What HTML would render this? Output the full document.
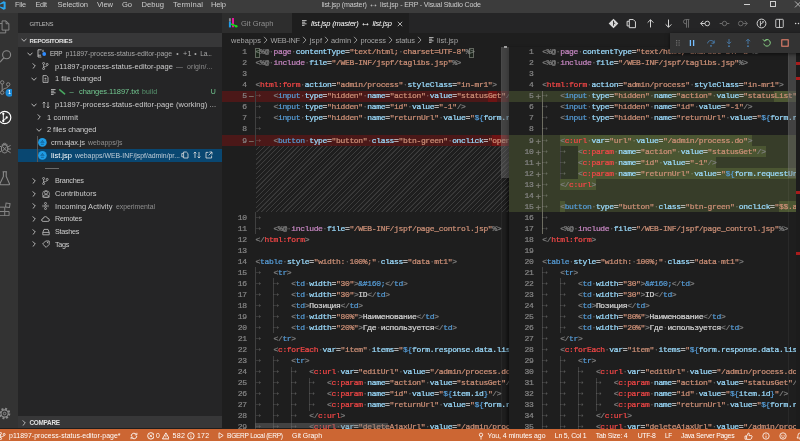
<!DOCTYPE html>
<html lang="en"><head><meta charset="utf-8"><title>list.jsp (master) ↔ list.jsp - ERP - Visual Studio Code</title>
<style>
html,body{margin:0;padding:0;background:#1e1e1e;overflow:hidden}
body{width:800px;height:441px;position:relative;font-family:"Liberation Sans",sans-serif;color:#cccccc;font-size:7.5px}
div,span,svg{position:absolute;box-sizing:border-box}
.t{white-space:pre;line-height:12px;height:12px}
#title{left:0;top:0;width:800px;height:13.3px;background:#3c3c3c}
#act{left:0;top:13.3px;width:17.7px;height:415px;background:#333333}
#side{left:17.7px;top:13.3px;width:204.5px;height:415px;background:#252526;overflow:hidden}
#tabs{left:222.2px;top:13.3px;width:577.8px;height:20px;background:#252526}
#crumbs{left:222.2px;top:33.3px;width:577.8px;height:13.4px;background:#1e1e1e}
#status{left:0;top:428.7px;width:800px;height:12.3px;background:#cc6633;color:#fff}
.pane{top:46.7px;height:382.1px;overflow:hidden;font-family:"Liberation Mono",monospace;font-size:8px;letter-spacing:-0.335px;-webkit-text-stroke:.22px;color:#d4d4d4}
#paneL{left:222px;width:287px}
#paneR{left:509px;width:286.8px;box-shadow:-3px 0 3px -1px rgba(0,0,0,.55)}
.lb{left:0;width:100%;height:11.03px}
.lb.del{background:#4b1818}
.lb.ins{background:#373d29}
.cb{height:11.03px}
.cb.del{background:#6e1414}
.cb.ins{background:#4b5632}
.hatch{right:0;background:repeating-linear-gradient(135deg,#1e1e1e 0,#1e1e1e 2.3px,#3d3d3d 2.6px,#3d3d3d 3.2px,#1e1e1e 3.4px)}
.gd{width:.6px;background:#404040}
.ln{left:0;height:11.03px;line-height:11.7px;color:#858585;white-space:pre}
.ln s{left:0;top:0;text-decoration:none;text-align:right;position:absolute;display:block}
.ln u{left:26.6px;top:1.6px;text-decoration:none;position:absolute;color:#808078;font-size:9.4px;letter-spacing:0}
.cl{height:11.03px;line-height:11.7px;white-space:pre}
.cl b,.cl i{font-weight:normal;font-style:normal}
.cl i{color:rgba(227,228,226,.23)}
.g{color:#808080}.k{color:#c586c0}.r{color:#f44747}.a{color:#9cdcfe}.s{color:#ce9178}
.h{color:#569cd6}
.hsb{left:33px;top:376.3px;width:132.5px;height:5.4px;background:rgba(121,121,121,.4)}
.gd.hi{background:#6c6c60;width:1px}
.ar{position:static;font-size:1.4em;line-height:0;font-style:normal}
.cl i.tb{display:inline-block;position:static;width:17.86px;letter-spacing:0;font-size:8.6px;height:11.03px;line-height:11.5px;vertical-align:top;overflow:hidden}
#app{left:0;top:0;width:800px;height:441px;overflow:hidden;will-change:transform}
.cb.dk{background:#303626}

</style></head><body>
<div id="app">
<div id="title"></div><div id="act"></div><div id="side"></div><div id="tabs"></div><div id="crumbs"></div>
<svg style="left:0.00px;top:0.50px" width="6.00" height="9.00" viewBox="0 0 6 9" ><path d="M0 2.6 L3.6 0.2 L5.6 1 L5.6 8 L3.6 8.8 L0 6.4 L0 5.4 L3.6 6.6 L3.6 2.4 L0 3.6 Z" fill="#2aa7f0"/></svg>
<span class="t " style="left:15.00px;top:-1.10px;font-size:7.35px;letter-spacing:-0.280px;color:#cccccc;">File</span>
<span class="t " style="left:35.50px;top:-1.10px;font-size:7.16px;letter-spacing:-0.280px;color:#cccccc;">Edit</span>
<span class="t " style="left:57.50px;top:-1.10px;font-size:7.60px;letter-spacing:-0.094px;color:#cccccc;">Selection</span>
<span class="t " style="left:97.00px;top:-1.10px;font-size:7.60px;letter-spacing:-0.109px;color:#cccccc;">View</span>
<span class="t " style="left:122.00px;top:-1.10px;font-size:7.60px;letter-spacing:-0.141px;color:#cccccc;">Go</span>
<span class="t " style="left:141.50px;top:-1.10px;font-size:7.60px;letter-spacing:0.027px;color:#cccccc;">Debug</span>
<span class="t " style="left:173.00px;top:-1.10px;font-size:7.60px;letter-spacing:0.185px;color:#cccccc;">Terminal</span>
<span class="t " style="left:211.00px;top:-1.10px;font-size:7.60px;letter-spacing:-0.208px;color:#cccccc;">Help</span>
<span class="t " style="left:321.70px;top:-1.10px;font-size:7.10px;letter-spacing:-0.178px;color:#cccccc;">list.jsp (master) <span class="ar">↔</span> list.jsp - ERP - Visual Studio Code</span>
<div style="left:743.5px;top:4.2px;width:6.5px;height:.8px;background:#d0d0d0"></div>
<div style="left:770px;top:1.3px;width:6.4px;height:6.2px;border:.8px solid #d0d0d0"></div>
<svg style="left:794.00px;top:1.00px" width="8.00" height="8.00" viewBox="0 0 8 8" ><path d="M1 0.4 L7 6.4 M7 0.4 L1 6.4" stroke="#d0d0d0" stroke-width=".8"/></svg>
<svg style="left:-0.60px;top:20.00px" width="10.60" height="14.00" viewBox="0 0 12 15" ><path d="M3.5 0.6 H8 L11.2 3.8 V11 H3.5 Z M8 0.6 V3.8 H11.2" fill="none" stroke="#8a8a8a" stroke-width="1.1"/><path d="M3.5 3.6 H0 M0.5 3.6 V14.2 H7.6 V11" fill="none" stroke="#8a8a8a" stroke-width="1.1"/></svg>
<svg style="left:0.00px;top:50.00px" width="12.00" height="13.00" viewBox="0 0 12 13" ><circle cx="6.6" cy="4.8" r="4" fill="none" stroke="#8a8a8a" stroke-width="1.1"/><path d="M3.8 7.8 L0 12.2" stroke="#8a8a8a" stroke-width="1.2"/></svg>
<svg style="left:0.00px;top:80.00px" width="12.00" height="17.00" viewBox="0 0 12 17" ><circle cx="2.2" cy="2.4" r="1.7" fill="none" stroke="#8a8a8a" stroke-width="1"/><circle cx="8.2" cy="4.4" r="1.7" fill="none" stroke="#8a8a8a" stroke-width="1"/><circle cx="2.2" cy="12.6" r="1.7" fill="none" stroke="#8a8a8a" stroke-width="1"/><path d="M2.2 4.1 V10.9 M8.2 6.1 C8.2 8.8 2.2 8 2.2 10.9" fill="none" stroke="#8a8a8a" stroke-width="1"/><circle cx="9.5" cy="12.7" r="4" fill="#1d8ad6"/></svg>
<span class="t " style="left:8.30px;top:87.20px;font-size:4.60px;color:#fff;font-weight:bold">1</span>
<svg style="left:0.00px;top:110.00px" width="12.00" height="15.00" viewBox="0 0 12 15" ><circle cx="4.7" cy="7.5" r="6.1" fill="#333333" stroke="#ffffff" stroke-width="1.2"/><path d="M3.3 3.8 V11 M3.3 10.6 C3.3 8.6 6.6 9.6 6.6 7.6" fill="none" stroke="#fff" stroke-width="1"/><circle cx="3.3" cy="3.8" r="1.15" fill="#fff"/><circle cx="3.3" cy="11" r="1.15" fill="#fff"/><circle cx="6.7" cy="7.4" r="1.15" fill="#fff"/></svg>
<svg style="left:0.00px;top:141.00px" width="12.00" height="15.00" viewBox="0 0 12 15" ><ellipse cx="4.6" cy="7.8" rx="3.2" ry="4.2" fill="none" stroke="#8a8a8a" stroke-width="1.1"/><path d="M2 4.4 C2.4 1.6 6.8 1.6 7.2 4.4 M7.8 6 L10.6 4.4 M7.8 8 H11 M7.8 10 L10.6 11.8 M1.4 6 L0 5.2 M1.4 10 L0 11 M2.6 5.6 L6.6 10 M6.6 5.6 L2.6 10" fill="none" stroke="#8a8a8a" stroke-width="1"/></svg>
<svg style="left:0.00px;top:171.00px" width="11.00" height="15.00" viewBox="0 0 11 15" ><path d="M2.6 0.8 H7 M3.4 0.8 V5.4 L0 12.6 Q-0.2 13.8 1 13.8 H8.6 Q9.8 13.8 9.4 12.6 L6.2 5.4 V0.8" fill="none" stroke="#8a8a8a" stroke-width="1.1"/></svg>
<svg style="left:0.00px;top:201.50px" width="10.50" height="14.50" viewBox="0 0 12 16" ><path d="M0 5.6 H5.4 V10.6 H0 M5.4 10.6 H10.4 V15.4 H0 M5.4 10.6 V15.4" fill="none" stroke="#8a8a8a" stroke-width="1.1"/><rect x="6.6" y="1.2" width="4.6" height="4.6" fill="none" stroke="#8a8a8a" stroke-width="1.1" transform="rotate(8 9 3.5)"/></svg>
<svg style="left:0.00px;top:405.50px" width="12.00" height="15.00" viewBox="0 0 12 15" ><circle cx="4.6" cy="7.5" r="4.6" fill="none" stroke="#8a8a8a" stroke-width="2.2" stroke-dasharray="1.9 1.7"/><circle cx="4.6" cy="7.5" r="3.6" fill="none" stroke="#8a8a8a" stroke-width="1.1"/><circle cx="4.6" cy="7.5" r="1.3" fill="none" stroke="#8a8a8a" stroke-width="1"/></svg>
<span class="t " style="left:29.50px;top:18.30px;font-size:6.01px;letter-spacing:-0.280px;color:#bbbbbb;">GITLENS</span>
<div style="left:17.7px;top:33.4px;width:204.5px;height:13.3px;background:#373738"></div>
<svg style="left:21.00px;top:37.30px" width="6.00" height="6.00" viewBox="0 0 6 6" ><path d="M0.5 1.7 L3 4.3 L5.5 1.7" fill="none" stroke="#c5c5c5" stroke-width="0.9"/></svg>
<span class="t " style="left:29.50px;top:34.50px;font-size:6.17px;letter-spacing:-0.280px;color:#e0e0e0;font-weight:bold">REPOSITORIES</span>
<svg style="left:27.00px;top:50.60px" width="6.00" height="6.00" viewBox="0 0 6 6" ><path d="M0.5 1.7 L3 4.3 L5.5 1.7" fill="none" stroke="#c5c5c5" stroke-width="0.9"/></svg>
<svg style="left:36.50px;top:49.10px" width="10.00" height="9.00" viewBox="0 0 10 9" ><path d="M1 0.8 H4.6 M1 0.8 V8 H4.4 M1 6.2 H4 M6 0.8 V3 M2.6 2.2 V2.4 M2.6 3.8 V4" fill="none" stroke="#c5c5c5" stroke-width=".9"/><circle cx="7.2" cy="5" r="1.9" fill="#2f8cff"/></svg>
<span class="t " style="left:50.00px;top:47.90px;font-size:6.35px;letter-spacing:-0.280px;color:#cccccc;">ERP</span>
<span class="t " style="left:65.50px;top:47.90px;font-size:6.90px;letter-spacing:-0.008px;color:#a8a8a8;">p11897-process-status-editor-page</span>
<span class="t " style="left:176.30px;top:47.90px;font-size:6.90px;color:#a8a8a8;">•</span>
<span class="t " style="left:183.00px;top:47.90px;font-size:7.22px;letter-spacing:0.280px;color:#a8a8a8;">+1</span>
<span class="t " style="left:194.30px;top:47.90px;font-size:6.90px;color:#a8a8a8;">•</span>
<span class="t " style="left:200.30px;top:47.90px;font-size:6.70px;color:#a8a8a8;letter-spacing:-0.35px;">La...</span>
<svg style="left:31.00px;top:63.33px" width="6.00" height="6.00" viewBox="0 0 6 6" ><path d="M1.7 0.4 L4.3 3 L1.7 5.6" fill="none" stroke="#c5c5c5" stroke-width="0.9"/></svg>
<svg style="left:42.00px;top:62.33px" width="7.00" height="8.00" viewBox="0 0 7 8" ><circle cx="1.6" cy="1.4" r="1" fill="none" stroke="#c5c5c5" stroke-width=".7"/><circle cx="1.6" cy="6.6" r="1" fill="none" stroke="#c5c5c5" stroke-width=".7"/><circle cx="5.2" cy="2.4" r="1" fill="none" stroke="#c5c5c5" stroke-width=".7"/><path d="M1.6 2.4 V5.6 M5.2 3.4 C5.2 4.8 1.6 4.2 1.6 5.6" fill="none" stroke="#c5c5c5" stroke-width=".7"/></svg>
<span class="t " style="left:55.00px;top:60.62px;font-size:7.50px;letter-spacing:0.057px;color:#cccccc;">p11897-process-status-editor-page</span>
<span class="t " style="left:176.00px;top:60.62px;font-size:6.90px;letter-spacing:0.114px;color:#8f8f8f;">—  origin/...</span>
<svg style="left:31.00px;top:76.05px" width="6.00" height="6.00" viewBox="0 0 6 6" ><path d="M0.5 1.7 L3 4.3 L5.5 1.7" fill="none" stroke="#c5c5c5" stroke-width="0.9"/></svg>
<svg style="left:41.50px;top:75.05px" width="7.00" height="8.00" viewBox="0 0 7 8" ><path d="M1 0.6 H4.4 L6 2.2 V7.4 H1 Z" fill="none" stroke="#c5c5c5" stroke-width=".8"/><path d="M2.4 3.6 H4.6 M3.5 2.6 V4.6 M2.4 5.8 H4.6" stroke="#c5c5c5" stroke-width=".6"/></svg>
<span class="t " style="left:55.00px;top:73.35px;font-size:7.50px;letter-spacing:-0.016px;color:#cccccc;">1 file changed</span>
<svg style="left:51.00px;top:88.78px" width="5.00" height="6.00" viewBox="0 0 5 6" ><path d="M0 0.6 H4.6 M0 2.2 H3.2 M0 3.8 H4.6 M0 5.4 H2.6" stroke="#c5c5c5" stroke-width=".9"/></svg>
<svg style="left:59.00px;top:88.78px" width="7.00" height="6.00" viewBox="0 0 7 6" ><path d="M0.8 0.8 L5.6 4.8" stroke="#48a860" stroke-width="1.6" stroke-linecap="round"/></svg>
<span class="t " style="left:69.50px;top:86.08px;font-size:7.50px;color:#73c991;">–</span>
<span class="t " style="left:79.00px;top:86.08px;font-size:7.50px;letter-spacing:-0.047px;color:#73c991;">changes.11897.txt</span>
<span class="t " style="left:142.00px;top:86.08px;font-size:6.90px;letter-spacing:0.109px;color:#5a9a72;">build</span>
<span class="t " style="left:210.80px;top:86.08px;font-size:7.00px;color:#73c991;">U</span>
<svg style="left:31.00px;top:101.50px" width="6.00" height="6.00" viewBox="0 0 6 6" ><path d="M0.5 1.7 L3 4.3 L5.5 1.7" fill="none" stroke="#c5c5c5" stroke-width="0.9"/></svg>
<svg style="left:41.50px;top:100.50px" width="8.00" height="8.00" viewBox="0 0 8 8" ><path d="M2 1 V7 M0.6 2.4 L2 1 L3.4 2.4 M6 7 V1 M4.6 5.6 L6 7 L7.4 5.6" fill="none" stroke="#c5c5c5" stroke-width=".8"/></svg>
<span class="t " style="left:55.00px;top:98.80px;font-size:7.50px;letter-spacing:0.077px;color:#cccccc;">p11897-process-status-editor-page (working) ...</span>
<svg style="left:35.50px;top:114.22px" width="6.00" height="6.00" viewBox="0 0 6 6" ><path d="M1.7 0.4 L4.3 3 L1.7 5.6" fill="none" stroke="#c5c5c5" stroke-width="0.9"/></svg>
<span class="t " style="left:47.00px;top:111.52px;font-size:7.50px;letter-spacing:0.083px;color:#cccccc;">1 commit</span>
<svg style="left:35.50px;top:126.95px" width="6.00" height="6.00" viewBox="0 0 6 6" ><path d="M0.5 1.7 L3 4.3 L5.5 1.7" fill="none" stroke="#c5c5c5" stroke-width="0.9"/></svg>
<span class="t " style="left:47.00px;top:124.25px;font-size:7.50px;letter-spacing:-0.068px;color:#cccccc;">2 files changed</span>
<div style="left:17.7px;top:149.04px;width:204.5px;height:12.72px;background:#094771"></div>
<div style="left:36.8px;top:136.31px;width:.7px;height:25.4px;background:#585858"></div>
<svg style="left:38.30px;top:138.28px" width="8.80" height="8.80" viewBox="0 0 9 9" ><circle cx="4.5" cy="4.5" r="4.4" fill="#1f9ce4"/><path d="M4 2 H5 V3 H6 V3.8 H3 V3 H4 Z M2.4 4.4 H6.6 V5.2 H2.4 Z M3 5.8 H6 V7 H3 Z" fill="#13679f"/></svg>
<span class="t " style="left:51.00px;top:136.98px;font-size:7.50px;letter-spacing:-0.184px;color:#cccccc;">crm.ajax.js</span>
<span class="t " style="left:88.00px;top:136.98px;font-size:6.90px;letter-spacing:0.002px;color:#8f8f8f;">webapps/js</span>
<svg style="left:38.30px;top:151.00px" width="8.80" height="8.80" viewBox="0 0 9 9" ><circle cx="4.5" cy="4.5" r="4.4" fill="#1f9ce4"/><path d="M4 2 H5 V3 H6 V3.8 H3 V3 H4 Z M2.4 4.4 H6.6 V5.2 H2.4 Z M3 5.8 H6 V7 H3 Z" fill="#13679f"/></svg>
<span class="t " style="left:51.00px;top:149.70px;font-size:7.50px;letter-spacing:0.022px;color:#ffffff;">list.jsp</span>
<span class="t " style="left:75.00px;top:149.70px;font-size:6.90px;letter-spacing:-0.010px;color:#c0cdd8;">webapps/WEB-INF/jspf/admin/pr...</span>
<svg style="left:181.00px;top:151.40px" width="8.00" height="8.00" viewBox="0 0 8 8" ><path d="M2.6 1 H5.4 L7 2.6 V7 H2.6 Z M0.8 2.4 H2.4 M0.8 2.4 V5.8 H2.4" fill="none" stroke="#e0e0e0" stroke-width=".8"/></svg>
<svg style="left:193.00px;top:151.40px" width="8.00" height="8.00" viewBox="0 0 8 8" ><path d="M2 1 V7 M0.6 2.4 L2 1 L3.4 2.4 M6 7 V1 M4.6 5.6 L6 7 L7.4 5.6" fill="none" stroke="#e0e0e0" stroke-width=".8"/></svg>
<svg style="left:205.00px;top:151.40px" width="8.00" height="8.00" viewBox="0 0 8 8" ><path d="M3.4 1.4 H1 V7 H6.6 V4.6 M4.4 1 H7 V3.6 M7 1 L3.6 4.4" fill="none" stroke="#e0e0e0" stroke-width=".8"/></svg>
<div style="left:45px;top:167.82px;width:14px;height:.7px;background:#6a6a6a"></div>
<svg style="left:31.00px;top:177.85px" width="6.00" height="6.00" viewBox="0 0 6 6" ><path d="M1.7 0.4 L4.3 3 L1.7 5.6" fill="none" stroke="#c5c5c5" stroke-width="0.9"/></svg>
<span class="t " style="left:55.00px;top:175.15px;font-size:7.33px;letter-spacing:-0.280px;color:#cccccc;">Branches</span>
<svg style="left:31.00px;top:190.57px" width="6.00" height="6.00" viewBox="0 0 6 6" ><path d="M1.7 0.4 L4.3 3 L1.7 5.6" fill="none" stroke="#c5c5c5" stroke-width="0.9"/></svg>
<span class="t " style="left:55.00px;top:187.88px;font-size:7.50px;letter-spacing:0.058px;color:#cccccc;">Contributors</span>
<svg style="left:31.00px;top:203.30px" width="6.00" height="6.00" viewBox="0 0 6 6" ><path d="M1.7 0.4 L4.3 3 L1.7 5.6" fill="none" stroke="#c5c5c5" stroke-width="0.9"/></svg>
<span class="t " style="left:55.00px;top:200.60px;font-size:7.50px;letter-spacing:0.103px;color:#cccccc;">Incoming Activity</span>
<svg style="left:31.00px;top:216.02px" width="6.00" height="6.00" viewBox="0 0 6 6" ><path d="M1.7 0.4 L4.3 3 L1.7 5.6" fill="none" stroke="#c5c5c5" stroke-width="0.9"/></svg>
<span class="t " style="left:55.00px;top:213.32px;font-size:7.17px;letter-spacing:-0.280px;color:#cccccc;">Remotes</span>
<svg style="left:31.00px;top:228.75px" width="6.00" height="6.00" viewBox="0 0 6 6" ><path d="M1.7 0.4 L4.3 3 L1.7 5.6" fill="none" stroke="#c5c5c5" stroke-width="0.9"/></svg>
<span class="t " style="left:55.00px;top:226.05px;font-size:7.24px;letter-spacing:-0.280px;color:#cccccc;">Stashes</span>
<svg style="left:31.00px;top:241.47px" width="6.00" height="6.00" viewBox="0 0 6 6" ><path d="M1.7 0.4 L4.3 3 L1.7 5.6" fill="none" stroke="#c5c5c5" stroke-width="0.9"/></svg>
<span class="t " style="left:55.00px;top:238.78px;font-size:7.26px;letter-spacing:-0.280px;color:#cccccc;">Tags</span>
<span class="t " style="left:116.00px;top:200.60px;font-size:6.90px;letter-spacing:-0.041px;color:#8f8f8f;">experimental</span>
<svg style="left:42.00px;top:176.85px" width="7.00" height="8.00" viewBox="0 0 7 8" ><circle cx="1.6" cy="1.4" r="1" fill="none" stroke="#c5c5c5" stroke-width=".7"/><circle cx="1.6" cy="6.6" r="1" fill="none" stroke="#c5c5c5" stroke-width=".7"/><circle cx="5.2" cy="2.4" r="1" fill="none" stroke="#c5c5c5" stroke-width=".7"/><path d="M1.6 2.4 V5.6 M5.2 3.4 C5.2 4.8 1.6 4.2 1.6 5.6" fill="none" stroke="#c5c5c5" stroke-width=".7"/></svg>
<svg style="left:41.50px;top:189.57px" width="8.00" height="8.00" viewBox="0 0 8 8" ><circle cx="4" cy="2.6" r="1.5" fill="none" stroke="#c5c5c5" stroke-width=".7"/><path d="M0.8 7.2 C0.8 3.8 7.2 3.8 7.2 7.2 Z" fill="none" stroke="#c5c5c5" stroke-width=".7"/><circle cx="4" cy="4.2" r="3.6" fill="none" stroke="#c5c5c5" stroke-width=".6"/></svg>
<svg style="left:42.00px;top:202.30px" width="7.00" height="8.00" viewBox="0 0 7 8" ><circle cx="3.5" cy="1.4" r="1" fill="none" stroke="#c5c5c5" stroke-width=".7"/><circle cx="3.5" cy="6.6" r="1" fill="none" stroke="#c5c5c5" stroke-width=".7"/><circle cx="3.5" cy="4" r="1" fill="none" stroke="#c5c5c5" stroke-width=".7"/><path d="M1 2.8 V5.2 M6 2.8 V5.2" stroke="#c5c5c5" stroke-width=".7"/></svg>
<svg style="left:41.00px;top:215.02px" width="9.00" height="8.00" viewBox="0 0 9 8" ><path d="M2.2 6.4 Q0.6 6.4 0.6 5 Q0.6 3.6 2.2 3.6 Q2.4 1.6 4.4 1.6 Q6.2 1.6 6.6 3.4 Q8.4 3.4 8.4 5 Q8.4 6.4 6.8 6.4 Z" fill="none" stroke="#c5c5c5" stroke-width=".8"/></svg>
<svg style="left:41.50px;top:227.75px" width="8.00" height="8.00" viewBox="0 0 8 8" ><path d="M0.8 4.4 L2 1.4 H6 L7.2 4.4 V6.8 H0.8 Z M0.8 4.4 H7.2" fill="none" stroke="#c5c5c5" stroke-width=".8"/></svg>
<svg style="left:41.50px;top:240.47px" width="8.00" height="8.00" viewBox="0 0 8 8" ><path d="M0.6 4 L3.6 1 H7.2 V4.4 L4.2 7.4 Z" fill="none" stroke="#c5c5c5" stroke-width=".8"/><circle cx="5.6" cy="2.6" r=".6" fill="#c5c5c5"/></svg>
<div style="left:17.7px;top:416.2px;width:204.5px;height:12.2px;background:#373738"></div>
<svg style="left:21.00px;top:419.60px" width="6.00" height="6.00" viewBox="0 0 6 6" ><path d="M1.7 0.4 L4.3 3 L1.7 5.6" fill="none" stroke="#c5c5c5" stroke-width="0.9"/></svg>
<span class="t " style="left:29.50px;top:416.90px;font-size:6.40px;letter-spacing:-0.280px;color:#e0e0e0;font-weight:bold">COMPARE</span>
<div style="left:222.2px;top:13.3px;width:69.7px;height:20px;background:#2d2d2d"></div>
<div style="left:292.3px;top:13.3px;width:116.9px;height:20px;background:#1e1e1e"></div>
<svg style="left:228.00px;top:17.00px" width="10.00" height="12.00" viewBox="0 0 10 12" ><path d="M1.9 1.2 V4.6" stroke="#8a8f94" stroke-width="1.9"/><path d="M1.9 4.6 V10.4" stroke="#1e9be8" stroke-width="2"/><path d="M5 0.9 V10.3" stroke="#e6169e" stroke-width="2"/><path d="M3 7 L8 9" stroke="#16d616" stroke-width="1.6"/><circle cx="8.2" cy="9.2" r="1.3" fill="#16e016"/></svg>
<span class="t " style="left:241.00px;top:18.10px;font-size:7.50px;letter-spacing:-0.002px;color:#8f8f8f;">Git Graph</span>
<svg style="left:302.00px;top:19.80px" width="5.00" height="6.00" viewBox="0 0 5 6" ><path d="M0 0.6 H4.6 M0 2.2 H3.2 M0 3.8 H4.6 M0 5.4 H2.6" stroke="#d0d0d0" stroke-width=".9"/></svg>
<span class="t " style="left:311.00px;top:18.10px;font-size:7.50px;letter-spacing:-0.198px;color:#ffffff;font-style:italic">list.jsp (master) <span class="ar">↔</span> list.jsp</span>
<svg style="left:397.00px;top:20.60px" width="6.00" height="6.00" viewBox="0 0 6 6" ><path d="M0.8 0.8 L5.2 5.2 M5.2 0.8 L0.8 5.2" stroke="#d0d0d0" stroke-width=".8"/></svg>
<svg style="left:607.50px;top:18.20px" width="11.00" height="11.00" viewBox="0 0 10 10" ><path d="M5 0.6 L9.4 5 L5 9.4 L0.6 5 Z" fill="#d8d8d8"/><path d="M5 2.6 V7 M5 4.2 L6.6 5.2" stroke="#252526" stroke-width=".8" fill="none"/></svg>
<svg style="left:626.00px;top:18.20px" width="11.00" height="11.00" viewBox="0 0 10 10" ><path d="M3 1.4 H6.6 L8.6 3.4 V8.8 H3 Z M1 3 H2.8 M1 3 V7.2 H2.8" fill="none" stroke="#d8d8d8" stroke-width=".9"/></svg>
<svg style="left:644.50px;top:18.20px" width="11.00" height="11.00" viewBox="0 0 10 10" ><path d="M5 8.6 V1.6 M2.4 4.2 L5 1.6 L7.6 4.2" fill="none" stroke="#d8d8d8" stroke-width=".9"/></svg>
<svg style="left:662.80px;top:18.20px" width="11.00" height="11.00" viewBox="0 0 10 10" ><path d="M5 1.4 V8.4 M2.4 5.8 L5 8.4 L7.6 5.8" fill="none" stroke="#d8d8d8" stroke-width=".9"/></svg>
<svg style="left:681.00px;top:18.20px" width="11.00" height="11.00" viewBox="0 0 10 10" ><path d="M6.8 1.4 V8.8 M5 1.4 V8.8 M7.6 1.4 H4.4 Q2.2 1.4 2.2 3.4 Q2.2 5.4 5 5.4" fill="none" stroke="#6c6c6c" stroke-width=".9"/></svg>
<svg style="left:700.00px;top:18.20px" width="11.00" height="11.00" viewBox="0 0 10 10" ><circle cx="6.6" cy="5" r="2.1" fill="none" stroke="#d8d8d8" stroke-width=".85"/><path d="M4.4 5 H0.6 M3 2.6 L0.6 5 L3 7.4" fill="none" stroke="#d8d8d8" stroke-width=".85"/></svg>
<svg style="left:718.50px;top:18.20px" width="11.00" height="11.00" viewBox="0 0 10 10" ><circle cx="5" cy="5" r="2" fill="none" stroke="#6c6c6c" stroke-width=".9"/><path d="M0.6 5 H3 M7 5 H9.4" stroke="#6c6c6c" stroke-width=".9"/></svg>
<svg style="left:737.00px;top:18.20px" width="11.00" height="11.00" viewBox="0 0 10 10" ><circle cx="3.4" cy="5" r="2.1" fill="none" stroke="#6c6c6c" stroke-width=".85"/><path d="M5.6 5 H9.4 M7 2.6 L9.4 5 L7 7.4" fill="none" stroke="#6c6c6c" stroke-width=".85"/></svg>
<svg style="left:756.00px;top:18.20px" width="11.00" height="11.00" viewBox="0 0 10 10" ><circle cx="5" cy="5" r="4" fill="none" stroke="#d8d8d8" stroke-width=".9"/><path d="M4 2.6 V7.6 M4 6 C4 4.8 6.4 5.2 6.4 3.8" fill="none" stroke="#d8d8d8" stroke-width=".8"/><circle cx="6.4" cy="3.4" r=".7" fill="#d8d8d8"/></svg>
<svg style="left:774.00px;top:18.20px" width="11.00" height="11.00" viewBox="0 0 10 10" ><rect x="1.6" y="1.2" width="6.8" height="7.4" rx=".6" fill="none" stroke="#d8d8d8" stroke-width=".8"/><path d="M5 1.2 V8.6" stroke="#d8d8d8" stroke-width=".8"/></svg>
<svg style="left:792.50px;top:18.20px" width="11.00" height="11.00" viewBox="0 0 10 10" ><circle cx="2.4" cy="5" r=".7" fill="#d8d8d8"/><circle cx="5" cy="5" r=".7" fill="#d8d8d8"/><circle cx="7.6" cy="5" r=".7" fill="#d8d8d8"/></svg>
<span class="t " style="left:231.00px;top:34.60px;font-size:7.40px;letter-spacing:0.068px;color:#a6a6a6;">webapps</span>
<span class="t " style="left:270.50px;top:34.60px;font-size:7.39px;letter-spacing:-0.280px;color:#a6a6a6;">WEB-INF</span>
<span class="t " style="left:309.50px;top:34.60px;font-size:7.49px;letter-spacing:0.280px;color:#a6a6a6;">jspf</span>
<span class="t " style="left:331.00px;top:34.60px;font-size:7.40px;letter-spacing:-0.035px;color:#a6a6a6;">admin</span>
<span class="t " style="left:360.50px;top:34.60px;font-size:7.40px;letter-spacing:-0.065px;color:#a6a6a6;">process</span>
<span class="t " style="left:395.50px;top:34.60px;font-size:7.40px;letter-spacing:-0.044px;color:#a6a6a6;">status</span>
<span class="t " style="left:437.00px;top:34.60px;font-size:7.40px;letter-spacing:0.065px;color:#a6a6a6;">list.jsp</span>
<svg style="left:263.00px;top:36.00px" width="5.00" height="8.00" viewBox="0 0 5 8" ><path d="M1 0.8 L4 4 L1 7.2" fill="none" stroke="#a0a0a0" stroke-width="0.9"/></svg>
<svg style="left:302.00px;top:36.00px" width="5.00" height="8.00" viewBox="0 0 5 8" ><path d="M1 0.8 L4 4 L1 7.2" fill="none" stroke="#a0a0a0" stroke-width="0.9"/></svg>
<svg style="left:324.00px;top:36.00px" width="5.00" height="8.00" viewBox="0 0 5 8" ><path d="M1 0.8 L4 4 L1 7.2" fill="none" stroke="#a0a0a0" stroke-width="0.9"/></svg>
<svg style="left:353.00px;top:36.00px" width="5.00" height="8.00" viewBox="0 0 5 8" ><path d="M1 0.8 L4 4 L1 7.2" fill="none" stroke="#a0a0a0" stroke-width="0.9"/></svg>
<svg style="left:388.00px;top:36.00px" width="5.00" height="8.00" viewBox="0 0 5 8" ><path d="M1 0.8 L4 4 L1 7.2" fill="none" stroke="#a0a0a0" stroke-width="0.9"/></svg>
<svg style="left:417.00px;top:36.00px" width="5.00" height="8.00" viewBox="0 0 5 8" ><path d="M1 0.8 L4 4 L1 7.2" fill="none" stroke="#a0a0a0" stroke-width="0.9"/></svg>
<svg style="left:428.60px;top:37.30px" width="5.00" height="6.00" viewBox="0 0 5 6" ><path d="M0 0.6 H4.6 M0 2.2 H3.2 M0 3.8 H4.6 M0 5.4 H2.6" stroke="#c5c5c5" stroke-width=".9"/></svg>
<div id="paneL" class="pane">
<div class="lb del" style="top:44.12px"></div>
<div class="cb del" style="top:44.12px;left:265.78px;width:8.93px"></div>
<div class="lb del" style="top:88.24px"></div>
<div class="cb del" style="top:88.24px;left:270.25px;width:160.74px"></div>
<div class="hatch" style="top:99.27px;height:66.18px;left:33.60px"></div>
<div class="gd" style="left:33.30px;top:44.12px;height:55.15px"></div>
<div class="gd" style="left:33.30px;top:165.45px;height:22.06px"></div>
<div class="gd" style="left:33.30px;top:220.60px;height:165.45px"></div>
<div class="gd" style="left:51.16px;top:231.63px;height:55.15px"></div>
<div class="gd" style="left:51.16px;top:308.84px;height:77.21px"></div>
<div class="gd" style="left:69.02px;top:319.87px;height:66.18px"></div>
<div class="gd" style="left:86.88px;top:330.90px;height:33.09px"></div>
<div class="ln" style="top:-0.70px"><s style="width:24.80px">1</s></div>
<div class="cl" style="top:-0.70px;left:33.60px"><b class="g">&lt;%@</b><i>·</i><b class="k">page</b><i>·</i><b class="a">contentType</b>=<b class="s">"text/html;</b><i>·</i><b class="s">charset=UTF-8"</b><b class="g">%&gt;</b></div>
<div class="ln" style="top:10.30px"><s style="width:24.80px">2</s></div>
<div class="cl" style="top:10.30px;left:33.60px"><b class="g">&lt;%@</b><i>·</i><b class="k">include</b><i>·</i><b class="a">file</b>=<b class="s">"/WEB-INF/jspf/taglibs.jsp"</b><b class="g">%&gt;</b></div>
<div class="ln" style="top:21.30px"><s style="width:24.80px">3</s></div>
<div class="ln" style="top:32.30px"><s style="width:24.80px">4</s></div>
<div class="cl" style="top:32.30px;left:33.60px"><b class="g">&lt;</b><b class="r">html:form</b><i>·</i><b class="a">action</b>=<b class="s">"admin/process"</b><i>·</i><b class="a">styleClass</b>=<b class="s">"in-mr1"</b><b class="g">&gt;</b></div>
<div class="ln" style="top:43.30px"><s style="width:24.80px">5</s><u>−</u></div>
<div class="cl" style="top:43.30px;left:33.60px"><i class="tb">→</i><b class="g">&lt;</b><b class="h">input</b><i>·</i><b class="a">type</b>=<b class="s">"hidden"</b><i>·</i><b class="a">name</b>=<b class="s">"action"</b><i>·</i><b class="a">value</b>=<b class="s">"statusGet"</b><b class="g">/&gt;</b></div>
<div class="ln" style="top:54.30px"><s style="width:24.80px">6</s></div>
<div class="cl" style="top:54.30px;left:33.60px"><i class="tb">→</i><b class="g">&lt;</b><b class="h">input</b><i>·</i><b class="a">type</b>=<b class="s">"hidden"</b><i>·</i><b class="a">name</b>=<b class="s">"id"</b><i>·</i><b class="a">value</b>=<b class="s">"-1"</b><b class="g">/&gt;</b></div>
<div class="ln" style="top:65.30px"><s style="width:24.80px">7</s></div>
<div class="cl" style="top:65.30px;left:33.60px"><i class="tb">→</i><b class="g">&lt;</b><b class="h">input</b><i>·</i><b class="a">type</b>=<b class="s">"hidden"</b><i>·</i><b class="a">name</b>=<b class="s">"returnUrl"</b><i>·</i><b class="a">value</b>=<b class="s">"</b><b class="h">${</b><b class="a">form.requestUrl</b><b class="h">}</b><b class="s">"</b><b class="g">/&gt;</b></div>
<div class="ln" style="top:76.30px"><s style="width:24.80px">8</s></div>
<div class="cl" style="top:76.30px;left:33.60px"><i class="tb">→</i></div>
<div class="ln" style="top:88.30px"><s style="width:24.80px">9</s><u>−</u></div>
<div class="cl" style="top:88.30px;left:33.60px"><i class="tb">→</i><b class="g">&lt;</b><b class="h">button</b><i>·</i><b class="a">type</b>=<b class="s">"button"</b><i>·</i><b class="a">class</b>=<b class="s">"btn-green"</b><i>·</i><b class="a">onclick</b>=<b class="s">"openUrlContent('</b><b class="h">${</b><b class="a">url</b><b class="h">}</b><b class="s">')"</b><b class="g">&gt;</b>+<b class="g">&lt;/</b><b class="h">button</b><b class="g">&gt;</b></div>
<div class="ln" style="top:165.30px"><s style="width:24.80px">10</s></div>
<div class="cl" style="top:165.30px;left:33.60px"><i class="tb">→</i></div>
<div class="ln" style="top:176.30px"><s style="width:24.80px">11</s></div>
<div class="cl" style="top:176.30px;left:33.60px"><i class="tb">→</i><b class="g">&lt;%@</b><i>·</i><b class="k">include</b><i>·</i><b class="a">file</b>=<b class="s">"/WEB-INF/jspf/page_control.jsp"</b><b class="g">%&gt;</b></div>
<div class="ln" style="top:187.30px"><s style="width:24.80px">12</s></div>
<div class="cl" style="top:187.30px;left:33.60px"><b class="g">&lt;/</b><b class="r">html:form</b><b class="g">&gt;</b></div>
<div class="ln" style="top:198.30px"><s style="width:24.80px">13</s></div>
<div class="ln" style="top:209.30px"><s style="width:24.80px">14</s></div>
<div class="cl" style="top:209.30px;left:33.60px"><b class="g">&lt;</b><b class="h">table</b><i>·</i><b class="a">style</b>=<b class="s">"width:</b><i>·</i><b class="s">100%;"</b><i>·</i><b class="a">class</b>=<b class="s">"data</b><i>·</i><b class="s">mt1"</b><b class="g">&gt;</b></div>
<div class="ln" style="top:220.30px"><s style="width:24.80px">15</s></div>
<div class="cl" style="top:220.30px;left:33.60px"><i class="tb">→</i><b class="g">&lt;</b><b class="h">tr</b><b class="g">&gt;</b></div>
<div class="ln" style="top:231.30px"><s style="width:24.80px">16</s></div>
<div class="cl" style="top:231.30px;left:33.60px"><i class="tb">→</i><i class="tb">→</i><b class="g">&lt;</b><b class="h">td</b><i>·</i><b class="a">width</b>=<b class="s">"30"</b><b class="g">&gt;</b><b class="h">&amp;#160;</b><b class="g">&lt;/</b><b class="h">td</b><b class="g">&gt;</b></div>
<div class="ln" style="top:242.30px"><s style="width:24.80px">17</s></div>
<div class="cl" style="top:242.30px;left:33.60px"><i class="tb">→</i><i class="tb">→</i><b class="g">&lt;</b><b class="h">td</b><i>·</i><b class="a">width</b>=<b class="s">"30"</b><b class="g">&gt;</b>ID<b class="g">&lt;/</b><b class="h">td</b><b class="g">&gt;</b></div>
<div class="ln" style="top:253.30px"><s style="width:24.80px">18</s></div>
<div class="cl" style="top:253.30px;left:33.60px"><i class="tb">→</i><i class="tb">→</i><b class="g">&lt;</b><b class="h">td</b><b class="g">&gt;</b>Позиция<b class="g">&lt;/</b><b class="h">td</b><b class="g">&gt;</b></div>
<div class="ln" style="top:264.30px"><s style="width:24.80px">19</s></div>
<div class="cl" style="top:264.30px;left:33.60px"><i class="tb">→</i><i class="tb">→</i><b class="g">&lt;</b><b class="h">td</b><i>·</i><b class="a">width</b>=<b class="s">"80%"</b><b class="g">&gt;</b>Наименование<b class="g">&lt;/</b><b class="h">td</b><b class="g">&gt;</b></div>
<div class="ln" style="top:275.30px"><s style="width:24.80px">20</s></div>
<div class="cl" style="top:275.30px;left:33.60px"><i class="tb">→</i><i class="tb">→</i><b class="g">&lt;</b><b class="h">td</b><i>·</i><b class="a">width</b>=<b class="s">"20%"</b><b class="g">&gt;</b>Где<i>·</i>используется<b class="g">&lt;/</b><b class="h">td</b><b class="g">&gt;</b></div>
<div class="ln" style="top:286.30px"><s style="width:24.80px">21</s></div>
<div class="cl" style="top:286.30px;left:33.60px"><i class="tb">→</i><b class="g">&lt;/</b><b class="h">tr</b><b class="g">&gt;</b></div>
<div class="ln" style="top:297.30px"><s style="width:24.80px">22</s></div>
<div class="cl" style="top:297.30px;left:33.60px"><i class="tb">→</i><b class="g">&lt;</b><b class="r">c:forEach</b><i>·</i><b class="a">var</b>=<b class="s">"item"</b><i>·</i><b class="a">items</b>=<b class="s">"</b><b class="h">${</b><b class="a">form.response.data.list</b><b class="h">}</b><b class="s">"</b><b class="g">&gt;</b></div>
<div class="ln" style="top:308.30px"><s style="width:24.80px">23</s></div>
<div class="cl" style="top:308.30px;left:33.60px"><i class="tb">→</i><i class="tb">→</i><b class="g">&lt;</b><b class="h">tr</b><b class="g">&gt;</b></div>
<div class="ln" style="top:319.30px"><s style="width:24.80px">24</s></div>
<div class="cl" style="top:319.30px;left:33.60px"><i class="tb">→</i><i class="tb">→</i><i class="tb">→</i><b class="g">&lt;</b><b class="r">c:url</b><i>·</i><b class="a">var</b>=<b class="s">"editUrl"</b><i>·</i><b class="a">value</b>=<b class="s">"/admin/process.do"</b><b class="g">&gt;</b></div>
<div class="ln" style="top:330.30px"><s style="width:24.80px">25</s></div>
<div class="cl" style="top:330.30px;left:33.60px"><i class="tb">→</i><i class="tb">→</i><i class="tb">→</i><i class="tb">→</i><b class="g">&lt;</b><b class="r">c:param</b><i>·</i><b class="a">name</b>=<b class="s">"action"</b><i>·</i><b class="a">value</b>=<b class="s">"statusGet"</b><b class="g">/&gt;</b></div>
<div class="ln" style="top:341.30px"><s style="width:24.80px">26</s></div>
<div class="cl" style="top:341.30px;left:33.60px"><i class="tb">→</i><i class="tb">→</i><i class="tb">→</i><i class="tb">→</i><b class="g">&lt;</b><b class="r">c:param</b><i>·</i><b class="a">name</b>=<b class="s">"id"</b><i>·</i><b class="a">value</b>=<b class="s">"</b><b class="h">${</b><b class="a">item.id</b><b class="h">}</b><b class="s">"</b><b class="g">/&gt;</b></div>
<div class="ln" style="top:352.30px"><s style="width:24.80px">27</s></div>
<div class="cl" style="top:352.30px;left:33.60px"><i class="tb">→</i><i class="tb">→</i><i class="tb">→</i><i class="tb">→</i><b class="g">&lt;</b><b class="r">c:param</b><i>·</i><b class="a">name</b>=<b class="s">"returnUrl"</b><i>·</i><b class="a">value</b>=<b class="s">"</b><b class="h">${</b><b class="a">form.requestUrl</b><b class="h">}</b><b class="s">"</b><b class="g">/&gt;</b></div>
<div class="ln" style="top:363.30px"><s style="width:24.80px">28</s></div>
<div class="cl" style="top:363.30px;left:33.60px"><i class="tb">→</i><i class="tb">→</i><i class="tb">→</i><b class="g">&lt;/</b><b class="r">c:url</b><b class="g">&gt;</b></div>
<div class="ln" style="top:374.30px"><s style="width:24.80px">29</s></div>
<div class="cl" style="top:374.30px;left:33.60px"><i class="tb">→</i><i class="tb">→</i><i class="tb">→</i><b class="g">&lt;</b><b class="r">c:url</b><i>·</i><b class="a">var</b>=<b class="s">"deleteAjaxUrl"</b><i>·</i><b class="a">value</b>=<b class="s">"/admin/process.do"</b><b class="g">&gt;</b></div>
<div class="hsb"></div>
</div>
<div id="paneR" class="pane">
<div class="lb ins" style="top:44.12px"></div>
<div class="cb ins" style="top:44.12px;left:265.48px;width:13.39px"></div>
<div class="lb ins" style="top:88.24px"></div>
<div class="cb ins" style="top:88.24px;left:51.16px;width:192.00px"></div>
<div class="lb ins" style="top:99.27px"></div>
<div class="cb dk" style="top:99.27px;left:51.16px;width:17.86px"></div>
<div class="cb ins" style="top:99.27px;left:69.02px;width:187.53px"></div>
<div class="lb ins" style="top:110.30px"></div>
<div class="cb dk" style="top:110.30px;left:51.16px;width:17.86px"></div>
<div class="cb ins" style="top:110.30px;left:69.02px;width:138.41px"></div>
<div class="lb ins" style="top:121.33px"></div>
<div class="cb dk" style="top:121.33px;left:51.16px;width:17.86px"></div>
<div class="cb ins" style="top:121.33px;left:69.02px;width:241.11px"></div>
<div class="lb ins" style="top:132.36px"></div>
<div class="cb ins" style="top:132.36px;left:51.16px;width:35.72px"></div>
<div class="lb ins" style="top:143.39px"></div>
<div class="lb ins" style="top:154.42px"></div>
<div class="cb ins" style="top:154.42px;left:51.16px;width:4.46px"></div>
<div class="cb ins" style="top:154.42px;left:269.94px;width:192.00px"></div>
<div class="gd" style="left:33.00px;top:44.12px;height:143.39px"></div>
<div class="gd" style="left:33.00px;top:220.60px;height:165.45px"></div>
<div class="gd" style="left:50.86px;top:99.27px;height:33.09px"></div>
<div class="gd" style="left:50.86px;top:231.63px;height:55.15px"></div>
<div class="gd" style="left:50.86px;top:308.84px;height:77.21px"></div>
<div class="gd" style="left:68.72px;top:319.87px;height:66.18px"></div>
<div class="gd" style="left:86.58px;top:330.90px;height:33.09px"></div>
<div class="gd hi" style="left:33px;top:44.12px;height:143.39px"></div>
<div class="ln" style="top:-0.70px"><s style="width:24.40px">1</s></div>
<div class="cl" style="top:-0.70px;left:33.30px"><b class="g">&lt;%@</b><i>·</i><b class="k">page</b><i>·</i><b class="a">contentType</b>=<b class="s">"text/html;</b><i>·</i><b class="s">charset=UTF-8"</b><b class="g">%&gt;</b></div>
<div class="ln" style="top:10.30px"><s style="width:24.40px">2</s></div>
<div class="cl" style="top:10.30px;left:33.30px"><b class="g">&lt;%@</b><i>·</i><b class="k">include</b><i>·</i><b class="a">file</b>=<b class="s">"/WEB-INF/jspf/taglibs.jsp"</b><b class="g">%&gt;</b></div>
<div class="ln" style="top:21.30px"><s style="width:24.40px">3</s></div>
<div class="ln" style="top:32.30px"><s style="width:24.40px">4</s></div>
<div class="cl" style="top:32.30px;left:33.30px"><b class="g">&lt;</b><b class="r">html:form</b><i>·</i><b class="a">action</b>=<b class="s">"admin/process"</b><i>·</i><b class="a">styleClass</b>=<b class="s">"in-mr1"</b><b class="g">&gt;</b></div>
<div class="ln" style="top:43.30px"><s style="width:24.40px">5</s><u>+</u></div>
<div class="cl" style="top:43.30px;left:33.30px"><i class="tb">→</i><b class="g">&lt;</b><b class="h">input</b><i>·</i><b class="a">type</b>=<b class="s">"hidden"</b><i>·</i><b class="a">name</b>=<b class="s">"action"</b><i>·</i><b class="a">value</b>=<b class="s">"statusList"</b><b class="g">/&gt;</b></div>
<div class="ln" style="top:54.30px"><s style="width:24.40px">6</s></div>
<div class="cl" style="top:54.30px;left:33.30px"><i class="tb">→</i><b class="g">&lt;</b><b class="h">input</b><i>·</i><b class="a">type</b>=<b class="s">"hidden"</b><i>·</i><b class="a">name</b>=<b class="s">"id"</b><i>·</i><b class="a">value</b>=<b class="s">"-1"</b><b class="g">/&gt;</b></div>
<div class="ln" style="top:65.30px"><s style="width:24.40px">7</s></div>
<div class="cl" style="top:65.30px;left:33.30px"><i class="tb">→</i><b class="g">&lt;</b><b class="h">input</b><i>·</i><b class="a">type</b>=<b class="s">"hidden"</b><i>·</i><b class="a">name</b>=<b class="s">"returnUrl"</b><i>·</i><b class="a">value</b>=<b class="s">"</b><b class="h">${</b><b class="a">form.requestUrl</b><b class="h">}</b><b class="s">"</b><b class="g">/&gt;</b></div>
<div class="ln" style="top:76.30px"><s style="width:24.40px">8</s></div>
<div class="cl" style="top:76.30px;left:33.30px"><i class="tb">→</i></div>
<div class="ln" style="top:88.30px"><s style="width:24.40px">9</s><u>+</u></div>
<div class="cl" style="top:88.30px;left:33.30px"><i class="tb">→</i><b class="g">&lt;</b><b class="r">c:url</b><i>·</i><b class="a">var</b>=<b class="s">"url"</b><i>·</i><b class="a">value</b>=<b class="s">"/admin/process.do"</b><b class="g">&gt;</b></div>
<div class="ln" style="top:99.30px"><s style="width:24.40px">10</s><u>+</u></div>
<div class="cl" style="top:99.30px;left:33.30px"><i class="tb">→</i><i class="tb">→</i><b class="g">&lt;</b><b class="r">c:param</b><i>·</i><b class="a">name</b>=<b class="s">"action"</b><i>·</i><b class="a">value</b>=<b class="s">"statusGet"</b><b class="g">/&gt;</b></div>
<div class="ln" style="top:110.30px"><s style="width:24.40px">11</s><u>+</u></div>
<div class="cl" style="top:110.30px;left:33.30px"><i class="tb">→</i><i class="tb">→</i><b class="g">&lt;</b><b class="r">c:param</b><i>·</i><b class="a">name</b>=<b class="s">"id"</b><i>·</i><b class="a">value</b>=<b class="s">"-1"</b><b class="g">/&gt;</b></div>
<div class="ln" style="top:121.30px"><s style="width:24.40px">12</s><u>+</u></div>
<div class="cl" style="top:121.30px;left:33.30px"><i class="tb">→</i><i class="tb">→</i><b class="g">&lt;</b><b class="r">c:param</b><i>·</i><b class="a">name</b>=<b class="s">"returnUrl"</b><i>·</i><b class="a">value</b>=<b class="s">"</b><b class="h">${</b><b class="a">form.requestUrl</b><b class="h">}</b><b class="s">"</b><b class="g">/&gt;</b></div>
<div class="ln" style="top:132.30px"><s style="width:24.40px">13</s><u>+</u></div>
<div class="cl" style="top:132.30px;left:33.30px"><i class="tb">→</i><b class="g">&lt;/</b><b class="r">c:url</b><b class="g">&gt;</b></div>
<div class="ln" style="top:143.30px"><s style="width:24.40px">14</s><u>+</u></div>
<div class="cl" style="top:143.30px;left:33.30px"><i class="tb">→</i></div>
<div class="ln" style="top:154.30px"><s style="width:24.40px">15</s><u>+</u></div>
<div class="cl" style="top:154.30px;left:33.30px"><i class="tb">→</i><b class="g">&lt;</b><b class="h">button</b><i>·</i><b class="a">type</b>=<b class="s">"button"</b><i>·</i><b class="a">class</b>=<b class="s">"btn-green"</b><i>·</i><b class="a">onclick</b>=<b class="s">"$$.ajax.load('</b><b class="h">${</b><b class="a">url</b><b class="h">}</b><b class="s">',</b><i>·</i><b class="s">$(this))"</b><b class="g">&gt;</b>+<b class="g">&lt;/</b><b class="h">button</b><b class="g">&gt;</b></div>
<div class="ln" style="top:165.30px"><s style="width:24.40px">16</s></div>
<div class="cl" style="top:165.30px;left:33.30px"><i class="tb">→</i></div>
<div class="ln" style="top:176.30px"><s style="width:24.40px">17</s></div>
<div class="cl" style="top:176.30px;left:33.30px"><i class="tb">→</i><b class="g">&lt;%@</b><i>·</i><b class="k">include</b><i>·</i><b class="a">file</b>=<b class="s">"/WEB-INF/jspf/page_control.jsp"</b><b class="g">%&gt;</b></div>
<div class="ln" style="top:187.30px"><s style="width:24.40px">18</s></div>
<div class="cl" style="top:187.30px;left:33.30px"><b class="g">&lt;/</b><b class="r">html:form</b><b class="g">&gt;</b></div>
<div class="ln" style="top:198.30px"><s style="width:24.40px">19</s></div>
<div class="ln" style="top:209.30px"><s style="width:24.40px">20</s></div>
<div class="cl" style="top:209.30px;left:33.30px"><b class="g">&lt;</b><b class="h">table</b><i>·</i><b class="a">style</b>=<b class="s">"width:</b><i>·</i><b class="s">100%;"</b><i>·</i><b class="a">class</b>=<b class="s">"data</b><i>·</i><b class="s">mt1"</b><b class="g">&gt;</b></div>
<div class="ln" style="top:220.30px"><s style="width:24.40px">21</s></div>
<div class="cl" style="top:220.30px;left:33.30px"><i class="tb">→</i><b class="g">&lt;</b><b class="h">tr</b><b class="g">&gt;</b></div>
<div class="ln" style="top:231.30px"><s style="width:24.40px">22</s></div>
<div class="cl" style="top:231.30px;left:33.30px"><i class="tb">→</i><i class="tb">→</i><b class="g">&lt;</b><b class="h">td</b><i>·</i><b class="a">width</b>=<b class="s">"30"</b><b class="g">&gt;</b><b class="h">&amp;#160;</b><b class="g">&lt;/</b><b class="h">td</b><b class="g">&gt;</b></div>
<div class="ln" style="top:242.30px"><s style="width:24.40px">23</s></div>
<div class="cl" style="top:242.30px;left:33.30px"><i class="tb">→</i><i class="tb">→</i><b class="g">&lt;</b><b class="h">td</b><i>·</i><b class="a">width</b>=<b class="s">"30"</b><b class="g">&gt;</b>ID<b class="g">&lt;/</b><b class="h">td</b><b class="g">&gt;</b></div>
<div class="ln" style="top:253.30px"><s style="width:24.40px">24</s></div>
<div class="cl" style="top:253.30px;left:33.30px"><i class="tb">→</i><i class="tb">→</i><b class="g">&lt;</b><b class="h">td</b><b class="g">&gt;</b>Позиция<b class="g">&lt;/</b><b class="h">td</b><b class="g">&gt;</b></div>
<div class="ln" style="top:264.30px"><s style="width:24.40px">25</s></div>
<div class="cl" style="top:264.30px;left:33.30px"><i class="tb">→</i><i class="tb">→</i><b class="g">&lt;</b><b class="h">td</b><i>·</i><b class="a">width</b>=<b class="s">"80%"</b><b class="g">&gt;</b>Наименование<b class="g">&lt;/</b><b class="h">td</b><b class="g">&gt;</b></div>
<div class="ln" style="top:275.30px"><s style="width:24.40px">26</s></div>
<div class="cl" style="top:275.30px;left:33.30px"><i class="tb">→</i><i class="tb">→</i><b class="g">&lt;</b><b class="h">td</b><i>·</i><b class="a">width</b>=<b class="s">"20%"</b><b class="g">&gt;</b>Где<i>·</i>используется<b class="g">&lt;/</b><b class="h">td</b><b class="g">&gt;</b></div>
<div class="ln" style="top:286.30px"><s style="width:24.40px">27</s></div>
<div class="cl" style="top:286.30px;left:33.30px"><i class="tb">→</i><b class="g">&lt;/</b><b class="h">tr</b><b class="g">&gt;</b></div>
<div class="ln" style="top:297.30px"><s style="width:24.40px">28</s></div>
<div class="cl" style="top:297.30px;left:33.30px"><i class="tb">→</i><b class="g">&lt;</b><b class="r">c:forEach</b><i>·</i><b class="a">var</b>=<b class="s">"item"</b><i>·</i><b class="a">items</b>=<b class="s">"</b><b class="h">${</b><b class="a">form.response.data.list</b><b class="h">}</b><b class="s">"</b><b class="g">&gt;</b></div>
<div class="ln" style="top:308.30px"><s style="width:24.40px">29</s></div>
<div class="cl" style="top:308.30px;left:33.30px"><i class="tb">→</i><i class="tb">→</i><b class="g">&lt;</b><b class="h">tr</b><b class="g">&gt;</b></div>
<div class="ln" style="top:319.30px"><s style="width:24.40px">30</s></div>
<div class="cl" style="top:319.30px;left:33.30px"><i class="tb">→</i><i class="tb">→</i><i class="tb">→</i><b class="g">&lt;</b><b class="r">c:url</b><i>·</i><b class="a">var</b>=<b class="s">"editUrl"</b><i>·</i><b class="a">value</b>=<b class="s">"/admin/process.do"</b><b class="g">&gt;</b></div>
<div class="ln" style="top:330.30px"><s style="width:24.40px">31</s></div>
<div class="cl" style="top:330.30px;left:33.30px"><i class="tb">→</i><i class="tb">→</i><i class="tb">→</i><i class="tb">→</i><b class="g">&lt;</b><b class="r">c:param</b><i>·</i><b class="a">name</b>=<b class="s">"action"</b><i>·</i><b class="a">value</b>=<b class="s">"statusGet"</b><b class="g">/&gt;</b></div>
<div class="ln" style="top:341.30px"><s style="width:24.40px">32</s></div>
<div class="cl" style="top:341.30px;left:33.30px"><i class="tb">→</i><i class="tb">→</i><i class="tb">→</i><i class="tb">→</i><b class="g">&lt;</b><b class="r">c:param</b><i>·</i><b class="a">name</b>=<b class="s">"id"</b><i>·</i><b class="a">value</b>=<b class="s">"</b><b class="h">${</b><b class="a">item.id</b><b class="h">}</b><b class="s">"</b><b class="g">/&gt;</b></div>
<div class="ln" style="top:352.30px"><s style="width:24.40px">33</s></div>
<div class="cl" style="top:352.30px;left:33.30px"><i class="tb">→</i><i class="tb">→</i><i class="tb">→</i><i class="tb">→</i><b class="g">&lt;</b><b class="r">c:param</b><i>·</i><b class="a">name</b>=<b class="s">"returnUrl"</b><i>·</i><b class="a">value</b>=<b class="s">"</b><b class="h">${</b><b class="a">form.requestUrl</b><b class="h">}</b><b class="s">"</b><b class="g">/&gt;</b></div>
<div class="ln" style="top:363.30px"><s style="width:24.40px">34</s></div>
<div class="cl" style="top:363.30px;left:33.30px"><i class="tb">→</i><i class="tb">→</i><i class="tb">→</i><b class="g">&lt;/</b><b class="r">c:url</b><b class="g">&gt;</b></div>
<div class="ln" style="top:374.30px"><s style="width:24.40px">35</s></div>
<div class="cl" style="top:374.30px;left:33.30px"><i class="tb">→</i><i class="tb">→</i><i class="tb">→</i><b class="g">&lt;</b><b class="r">c:url</b><i>·</i><b class="a">var</b>=<b class="s">"deleteAjaxUrl"</b><i>·</i><b class="a">value</b>=<b class="s">"/admin/process.do"</b><b class="g">&gt;</b></div>
</div>
<div style="left:501.2px;top:46.7px;width:7.9px;height:131px;background:rgba(121,121,121,.4)"></div>
<div style="left:788.1px;top:46.9px;width:7.8px;height:130.8px;background:rgba(121,121,121,.4)"></div>
<div style="left:788.2px;top:46.9px;width:.6px;height:381.4px;background:rgba(255,255,255,.05)"></div>
<div style="left:795.8px;top:46.9px;width:4.2px;height:381.4px;background:#1c1c1c"></div>
<div style="left:795.8px;top:61.6px;width:4.2px;height:3.0px;background:#a81c1c"></div>
<div style="left:795.8px;top:76.6px;width:4.2px;height:3.3px;background:#a81c1c"></div>
<div style="left:795.8px;top:190.8px;width:4.2px;height:3.3px;background:#a81c1c"></div>
<div style="left:795.8px;top:251.6px;width:4.2px;height:3.3px;background:#a81c1c"></div>
<div style="left:503.6px;top:46.3px;width:3.6px;height:2.2px;background:#a0a0a0"></div>
<div style="left:501.2px;top:46.7px;width:.6px;height:382px;background:rgba(255,255,255,.045)"></div>
<div style="left:255.3px;top:47.5px;width:4.7px;height:10px;border:.6px solid rgba(136,140,132,.65);background:rgba(0,100,0,.12)"></div>
<div style="left:468.9px;top:47.5px;width:4.7px;height:10px;border:.6px solid rgba(136,140,132,.65);background:rgba(0,100,0,.08)"></div>
<div style="left:669.5px;top:33px;width:140px;height:19.6px;background:#333333;box-shadow:0 1px 4px rgba(0,0,0,.6)"></div>
<svg style="left:673.30px;top:37.80px" width="10.00" height="10.00" viewBox="0 0 10 10" ><rect x="3.2" y="2.2" width="1" height="1" fill="#8c8c8c"/><rect x="3.2" y="4.4" width="1" height="1" fill="#8c8c8c"/><rect x="3.2" y="6.6" width="1" height="1" fill="#8c8c8c"/><rect x="5.6" y="2.2" width="1" height="1" fill="#8c8c8c"/><rect x="5.6" y="4.4" width="1" height="1" fill="#8c8c8c"/><rect x="5.6" y="6.6" width="1" height="1" fill="#8c8c8c"/></svg>
<svg style="left:687.30px;top:37.80px" width="10.00" height="10.00" viewBox="0 0 10 10" ><path d="M3.4 2 V8 M6.6 2 V8" stroke="#75beff" stroke-width="1.3"/></svg>
<svg style="left:705.50px;top:37.80px" width="10.00" height="10.00" viewBox="0 0 10 10" ><path d="M1.6 5.4 C2 1.6 7.6 1.6 8 5 M8.2 2.4 V5.2 H5.4" fill="none" stroke="#4a7fb0" stroke-width=".9"/><circle cx="5" cy="7.8" r=".9" fill="#4a7fb0"/></svg>
<svg style="left:724.00px;top:37.80px" width="10.00" height="10.00" viewBox="0 0 10 10" ><path d="M5 1 V5.6 M3 3.8 L5 5.8 L7 3.8" fill="none" stroke="#4a7fb0" stroke-width=".9"/><circle cx="5" cy="8.2" r=".9" fill="#4a7fb0"/></svg>
<svg style="left:743.00px;top:37.80px" width="10.00" height="10.00" viewBox="0 0 10 10" ><path d="M5 6 V1.4 M3 3.2 L5 1.2 L7 3.2" fill="none" stroke="#4a7fb0" stroke-width=".9"/><circle cx="5" cy="8.2" r=".9" fill="#4a7fb0"/></svg>
<svg style="left:762.00px;top:37.80px" width="10.00" height="10.00" viewBox="0 0 10 10" ><path d="M2.4 2.8 A3.3 3.3 0 1 1 1.8 5.6" fill="none" stroke="#89d185" stroke-width="1"/><path d="M0.8 1.2 L2.6 3.2 L4.8 1.8" fill="none" stroke="#89d185" stroke-width=".9"/></svg>
<svg style="left:780.20px;top:37.80px" width="10.00" height="10.00" viewBox="0 0 10 10" ><rect x="1.8" y="1.8" width="6.4" height="6.4" fill="none" stroke="#f48771" stroke-width="1"/></svg>
<div id="status"></div>
<svg style="left:-1.00px;top:431.80px" width="7.00" height="8.00" viewBox="0 0 7 8" ><circle cx="1.6" cy="1.4" r="1" fill="none" stroke="#fff" stroke-width=".8"/><circle cx="1.6" cy="6.6" r="1" fill="none" stroke="#fff" stroke-width=".8"/><circle cx="5.2" cy="2.4" r="1" fill="none" stroke="#fff" stroke-width=".8"/><path d="M1.6 2.4 V5.6 M5.2 3.4 C5.2 4.8 1.6 4.2 1.6 5.6" fill="none" stroke="#fff" stroke-width=".8"/></svg>
<span class="t " style="left:9.00px;top:430.10px;font-size:6.90px;letter-spacing:0.063px;color:#ffffff;">p11897-process-status-editor-page*</span>
<svg style="left:129.50px;top:431.80px" width="8.00" height="8.00" viewBox="0 0 8 8" ><path d="M1.2 4 A2.8 2.8 0 0 1 6.4 2.6 M6.8 4 A2.8 2.8 0 0 1 1.6 5.4" fill="none" stroke="#fff" stroke-width=".9"/><path d="M6.9 0.8 V2.9 H4.8 M1.1 7.2 V5.1 H3.2" fill="none" stroke="#fff" stroke-width=".8"/></svg>
<svg style="left:146.60px;top:431.90px" width="7.80" height="7.80" viewBox="0 0 7 7" ><circle cx="3.5" cy="3.5" r="2.9" fill="none" stroke="#fff" stroke-width=".8"/><path d="M2.3 2.3 L4.7 4.7 M4.7 2.3 L2.3 4.7" stroke="#fff" stroke-width=".7"/></svg>
<span class="t " style="left:156.00px;top:430.10px;font-size:6.82px;letter-spacing:0.000px;color:#ffffff;">0</span>
<svg style="left:161.60px;top:431.90px" width="7.80" height="7.80" viewBox="0 0 7 7" ><path d="M3.5 0.8 L6.6 6.2 H0.4 Z" fill="none" stroke="#fff" stroke-width=".8"/><path d="M3.5 2.8 V4.4 M3.5 5 V5.6" stroke="#fff" stroke-width=".7"/></svg>
<span class="t " style="left:172.50px;top:430.10px;font-size:7.16px;letter-spacing:0.280px;color:#ffffff;">582</span>
<svg style="left:187.10px;top:431.90px" width="7.80" height="7.80" viewBox="0 0 7 7" ><circle cx="3.5" cy="3.5" r="2.9" fill="none" stroke="#fff" stroke-width=".8"/><path d="M3.5 3.2 V5 M3.5 1.9 V2.5" stroke="#fff" stroke-width=".8"/></svg>
<span class="t " style="left:197.00px;top:430.10px;font-size:6.90px;letter-spacing:0.250px;color:#ffffff;">172</span>
<svg style="left:217.50px;top:432.30px" width="6.00" height="7.00" viewBox="0 0 6 7" ><path d="M1 0.8 L5.2 3.5 L1 6.2 Z" fill="none" stroke="#fff" stroke-width=".8"/></svg>
<span class="t " style="left:227.00px;top:430.10px;font-size:6.62px;letter-spacing:-0.280px;color:#ffffff;">BGERP Local (ERP)</span>
<span class="t " style="left:292.00px;top:430.10px;font-size:6.90px;letter-spacing:0.016px;color:#ffffff;">Git Graph</span>
<svg style="left:478.00px;top:431.80px" width="6.00" height="8.00" viewBox="0 0 6 8" ><circle cx="3" cy="2.8" r="1.7" fill="none" stroke="#fff" stroke-width=".8"/><path d="M3 4.5 V7.6" stroke="#fff" stroke-width=".8"/></svg>
<span class="t " style="left:487.50px;top:430.10px;font-size:6.90px;letter-spacing:-0.044px;color:#ffffff;">You, 4 minutes ago</span>
<span class="t " style="left:554.70px;top:430.10px;font-size:6.90px;letter-spacing:-0.133px;color:#ffffff;">Ln 5, Col 1</span>
<span class="t " style="left:595.70px;top:430.10px;font-size:6.90px;letter-spacing:-0.209px;color:#ffffff;">Tab Size: 4</span>
<span class="t " style="left:637.70px;top:430.10px;font-size:6.83px;letter-spacing:-0.280px;color:#ffffff;">UTF-8</span>
<span class="t " style="left:665.00px;top:430.10px;font-size:6.41px;letter-spacing:-0.280px;color:#ffffff;">LF</span>
<span class="t " style="left:681.00px;top:430.10px;font-size:6.88px;letter-spacing:-0.280px;color:#ffffff;">Java Server Pages</span>
<svg style="left:744.00px;top:431.80px" width="9.00" height="8.00" viewBox="0 0 9 8" ><path d="M1 4 H2.6 V7.2 H1 Z M2.6 4.2 L4.4 1 Q5.6 1 5.2 2.6 L5 3.6 H7.6 Q8.4 3.8 8 4.8 L7.2 7 Q7 7.4 6.4 7.4 H2.6" fill="none" stroke="#fff" stroke-width=".8"/></svg>
<svg style="left:761.50px;top:431.80px" width="8.00" height="8.00" viewBox="0 0 8 8" ><circle cx="4" cy="4" r="3.2" fill="none" stroke="#fff" stroke-width=".8"/><path d="M4 3.6 V5.8 M4 2.2 V2.8" stroke="#fff" stroke-width=".8"/></svg>
<svg style="left:779.00px;top:431.80px" width="8.00" height="8.00" viewBox="0 0 8 8" ><circle cx="4" cy="4" r="3.2" fill="none" stroke="#fff" stroke-width=".8"/><path d="M2.4 4.6 Q4 6.6 5.6 4.6" fill="none" stroke="#fff" stroke-width=".7"/><circle cx="2.9" cy="3.2" r=".5" fill="#fff"/><circle cx="5.1" cy="3.2" r=".5" fill="#fff"/></svg>
<svg style="left:796.00px;top:431.80px" width="8.00" height="8.00" viewBox="0 0 8 8" ><path d="M1 6 Q2 5 2 3.4 Q2 1 4 1 Q6 1 6 3.4 Q6 5 7 6 Z M3.2 7 H4.8" fill="none" stroke="#fff" stroke-width=".8"/></svg>
</div>
</body></html>
